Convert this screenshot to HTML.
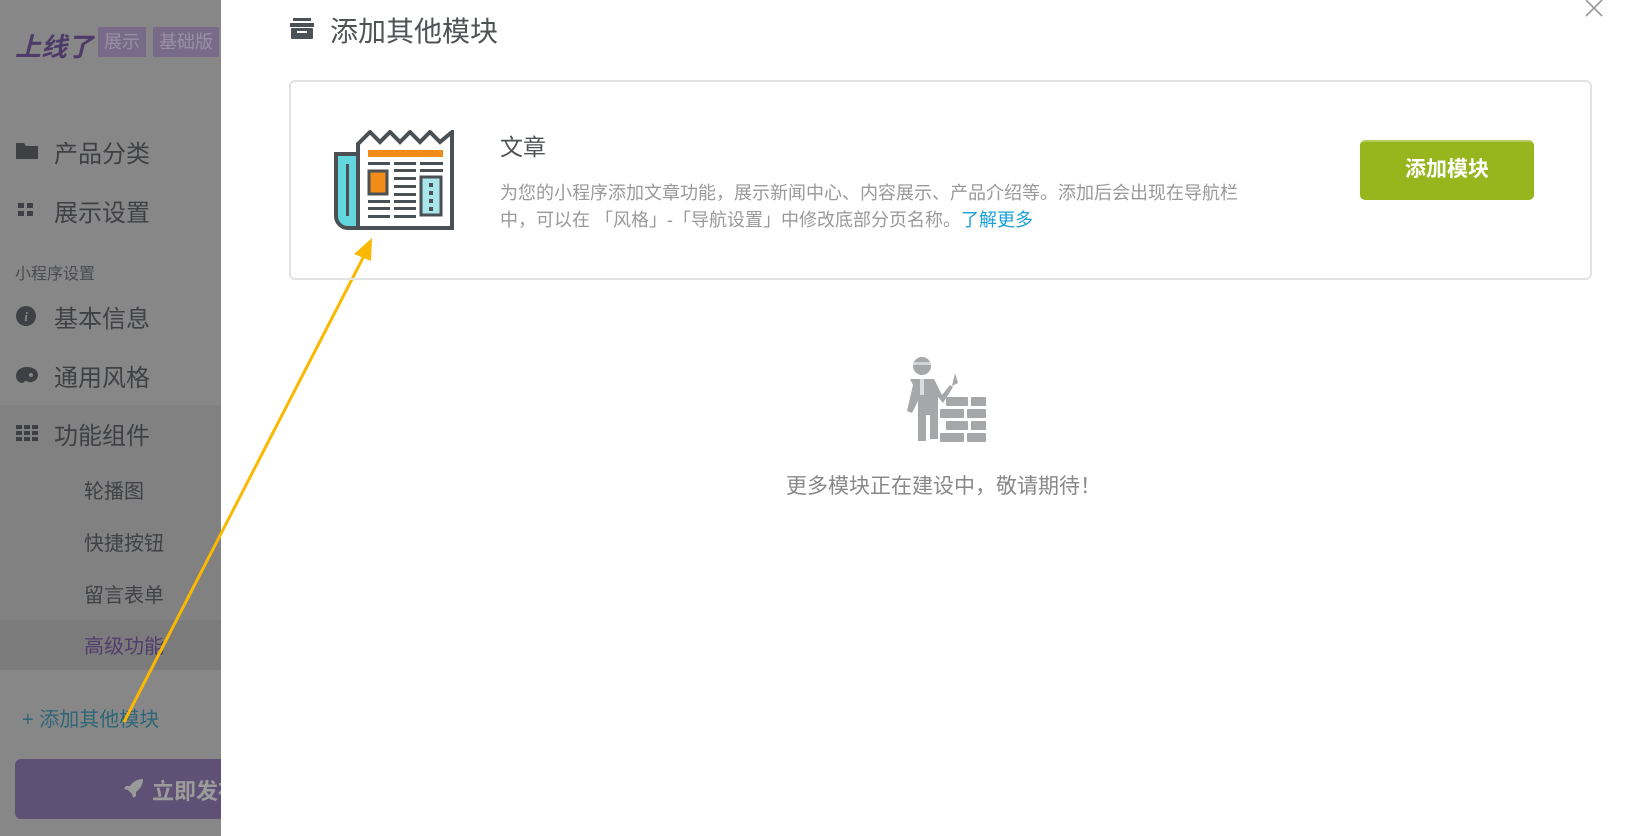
<!DOCTYPE html>
<html><head><meta charset="utf-8"><style>
*{margin:0;padding:0;box-sizing:border-box}
body{width:1635px;height:836px;overflow:hidden;background:#fff;font-family:"Liberation Sans","Noto Sans CJK SC",sans-serif;position:relative}
.sb{position:absolute;left:0;top:0;width:221px;height:836px;background:#878787;overflow:hidden}
.a{position:absolute;white-space:nowrap}
.mi{font-size:24px;color:#3e4043;left:54px}
.sub{font-size:20px;color:#3f4144;left:84px}
</style></head><body>
<div class="sb">
  <div class="a" style="left:0;top:405px;width:221px;height:265px;background:#818181"></div>
  <div class="a" style="left:0;top:620px;width:221px;height:50px;background:#7b7b7b"></div>
  <div class="a" style="left:15px;top:27px;font-size:26px;font-weight:bold;font-style:italic;color:#4d3a68">上线了</div>
  <div class="a" style="left:98px;top:27px;width:48px;height:30px;background:#7a6a8a;color:#9a90a6;font-size:18px;line-height:30px;text-align:center">展示</div>
  <div class="a" style="left:153px;top:27px;width:66px;height:30px;background:#7a6a8a;color:#9a90a6;font-size:18px;line-height:30px;text-align:center">基础版</div>
  <svg class="a" style="left:16px;top:141px" width="22" height="18"><path d="M0 2h8l2 3h12v13H0z" fill="#3e4043"/></svg>
  <div class="a mi" style="top:134px">产品分类</div>
  <svg class="a" style="left:18px;top:203px" width="16" height="14"><rect x="0" y="0" width="6" height="5" fill="#3e4043"/><rect x="9" y="0" width="6" height="5" fill="#3e4043"/><rect x="0" y="8" width="6" height="5" fill="#3e4043"/><rect x="9" y="8" width="6" height="5" fill="#3e4043"/></svg>
  <div class="a mi" style="top:193px">展示设置</div>
  <div class="a" style="left:15px;top:260px;font-size:16px;color:#4a4c4f">小程序设置</div>
  <svg class="a" style="left:16px;top:306px" width="20" height="20"><circle cx="10" cy="10" r="10" fill="#3e4043"/><text x="10" y="15" font-size="13" font-style="italic" font-weight="bold" fill="#878787" text-anchor="middle" font-family="Liberation Serif">i</text></svg>
  <div class="a mi" style="top:299px">基本信息</div>
  <svg class="a" style="left:16px;top:366px" width="22" height="18"><path d="M11 1C4 1 0 5 0 10c0 4 3 7 6 7 2 0 2-2 4-2s3 2 6 1c3-1 6-3 6-7 0-5-5-8-11-8z" fill="#3e4043"/><circle cx="15" cy="9" r="2" fill="#878787"/></svg>
  <div class="a mi" style="top:358px">通用风格</div>
  <svg class="a" style="left:16px;top:425px" width="24" height="16"><g fill="#3e4043"><rect x="0" y="0" width="6" height="4"/><rect x="8" y="0" width="6" height="4"/><rect x="16" y="0" width="6" height="4"/><rect x="0" y="6" width="6" height="4"/><rect x="8" y="6" width="6" height="4"/><rect x="16" y="6" width="6" height="4"/><rect x="0" y="12" width="6" height="4"/><rect x="8" y="12" width="6" height="4"/><rect x="16" y="12" width="6" height="4"/></g></svg>
  <div class="a mi" style="top:416px">功能组件</div>
  <div class="a sub" style="top:475px">轮播图</div>
  <div class="a sub" style="top:527px">快捷按钮</div>
  <div class="a sub" style="top:579px">留言表单</div>
  <div class="a sub" style="top:630px;color:#513d6d">高级功能</div>
  <div class="a" style="left:22px;top:703px;font-size:20px;color:#2f6677">+ 添加其他模块</div>
  <div class="a" style="left:15px;top:759px;width:230px;height:60px;background:#5f5175;border-radius:6px"></div>
  <svg class="a" style="left:124px;top:778px" width="20" height="20"><path d="M19 1C13 1 9 4 6 8L2 8 0 11l4 1 4 4 1 4 3-2 0-4c4-3 7-7 7-13z" fill="#9a9a9a"/></svg>
  <div class="a" style="left:152px;top:774px;font-size:22px;font-weight:bold;color:#9b9b9b">立即发布</div>
</div>
<svg class="a" style="left:0;top:0" width="1635" height="836">
  <line x1="124" y1="722" x2="366" y2="252" stroke="#fbb800" stroke-width="3"/>
  <path d="M372 238 L354 254 L371 261 Z" fill="#fbb800"/>
</svg>
<svg class="a" style="left:289px;top:18px" width="26" height="22"><rect x="4" y="0" width="18" height="3" fill="#4b5257"/><rect x="1" y="5" width="24" height="4" fill="#4b5257"/><rect x="2" y="10" width="22" height="11" rx="1" fill="#4b5257"/><rect x="8" y="13" width="10" height="2" fill="#fff"/></svg>
<div class="a" style="left:330px;top:10px;font-size:28px;color:#4f5356">添加其他模块</div>
<svg class="a" style="left:1584px;top:0" width="20" height="20"><path d="M2 0L18 16M18 0L2 16" stroke="#999" stroke-width="1.6"/></svg>
<div class="a" style="left:289px;top:80px;width:1303px;height:200px;border:2px solid #e2e2e2;border-radius:6px"></div>
<svg class="a" style="left:334px;top:130px" width="122" height="100">
  <path d="M2 24h22v74H14a12 12 0 0 1-12-12z" fill="#62d7dd" stroke="#4b5055" stroke-width="4"/>
  <rect x="12" y="34" width="3" height="52" fill="#4b5055"/>
  <path d="M24 98V14l12-12 10 10 10-10 10 10 10-10 10 10 10-10 10 10 12-10v96z" fill="#fff" stroke="#4b5055" stroke-width="4" stroke-linejoin="miter"/>
  <rect x="34" y="20" width="75" height="7" fill="#f08c17"/>
  <g fill="#4b5055"><rect x="34" y="32" width="22" height="3"/><rect x="60" y="32" width="22" height="3"/><rect x="86" y="32" width="23" height="3"/><rect x="60" y="39" width="22" height="3"/><rect x="86" y="39" width="23" height="3"/><rect x="60" y="47" width="22" height="3"/><rect x="60" y="55" width="22" height="3"/><rect x="60" y="63" width="22" height="3"/><rect x="34" y="70" width="22" height="3"/><rect x="60" y="70" width="22" height="3"/><rect x="34" y="77" width="22" height="3"/><rect x="60" y="77" width="22" height="3"/><rect x="34" y="85" width="22" height="3"/><rect x="60" y="85" width="22" height="3"/></g>
  <rect x="35" y="41" width="18" height="23" fill="#f08c17" stroke="#4b5055" stroke-width="3"/>
  <rect x="87" y="47" width="20" height="38" fill="#a8e6ea" stroke="#4b5055" stroke-width="3"/>
  <g fill="#4b5055"><rect x="95" y="53" width="4" height="4"/><rect x="95" y="61" width="4" height="4"/><rect x="95" y="69" width="4" height="4"/><rect x="95" y="77" width="4" height="4"/></g>
</svg>
<div class="a" style="left:500px;top:128px;font-size:23px;color:#4f5356">文章</div>
<div class="a" style="left:500px;top:180px;font-size:18px;color:#999;line-height:27px">为您的小程序添加文章功能，展示新闻中心、内容展示、产品介绍等。添加后会出现在导航栏<br>中，可以在 「风格」-「导航设置」中修改底部分页名称。<span style="color:#1aa0d8">了解更多</span></div>
<div class="a" style="left:1360px;top:140px;width:174px;height:60px;background:#97b61e;border-radius:5px;border-top:2px solid #b3cb5a;color:#fff;font-size:21px;font-weight:bold;text-align:center;line-height:56px">添加模块</div>
<svg class="a" style="left:900px;top:355px" width="90" height="90" fill="#a5a7a9">
  <circle cx="22" cy="11" r="9"/><rect x="13" y="7" width="18" height="3" fill="#fff" opacity=".5"/>
  <path d="M10 24h24l8 16 8-10 3 2-10 16-5-6v42h-8V60h-4v26h-8V46l-6 12-5-2 6-26z"/>
  <rect x="20" y="24" width="4" height="16" fill="#fff" opacity=".6"/>
  <path d="M55 18l-3 13 6-3z"/>
  <rect x="46" y="42" width="22" height="9" rx="1"/><rect x="71" y="42" width="15" height="9" rx="1"/>
  <rect x="40" y="54" width="24" height="9" rx="1"/><rect x="67" y="54" width="19" height="9" rx="1"/>
  <rect x="46" y="66" width="22" height="9" rx="1"/><rect x="71" y="66" width="15" height="9" rx="1"/>
  <rect x="40" y="78" width="24" height="9" rx="1"/><rect x="67" y="78" width="19" height="9" rx="1"/>
</svg>
<div class="a" style="left:786px;top:470px;font-size:21px;color:#888">更多模块正在建设中，敬请期待！</div>
</body></html>
